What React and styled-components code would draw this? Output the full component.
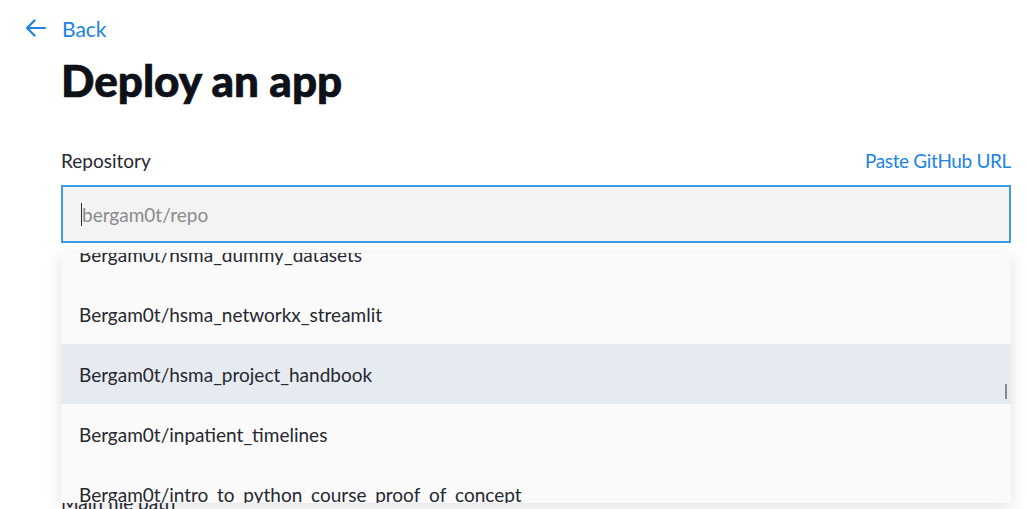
import React from 'react';
import styled, { createGlobalStyle } from 'styled-components';

const GlobalStyle = createGlobalStyle`
  html, body {
    margin: 0;
    padding: 0;
    height: 509px;
    background: #ffffff;
    overflow: hidden;
  }
  body {
    font-family: 'Lato', 'Noto Sans', sans-serif;
    color: #262730;
  }
`;

const Page = styled.div`
  width: 1027px;
  display: flex;
  flex-direction: column;
  padding: 14px 16px 0 24px;
  box-sizing: border-box;

  & > * {
    flex-shrink: 0;
  }
`;

const BackLink = styled.a`
  display: flex;
  align-items: center;
  gap: 16px;
  height: 28px;
  color: #1c83e1;
  font-size: 21px;
  text-decoration: none;
  cursor: pointer;
`;

const Content = styled.div`
  display: flex;
  flex-direction: column;
  margin-left: 37px;
`;

const Title = styled.h1`
  margin: 12px 0 0;
  font-size: 44px;
  font-weight: 900;
  color: #0e1117;
  -webkit-text-stroke: 0.7px #0e1117;
  line-height: 52px;
`;

const Field = styled.div`
  position: relative;
  display: flex;
  flex-direction: column;
  flex-shrink: 0;
  margin-top: ${p => p.$top || 0}px;
`;

const LabelRow = styled.div`
  display: flex;
  justify-content: space-between;
  align-items: center;
  height: 24px;
  margin-bottom: 13px;
`;

const Label = styled.span`
  font-size: 19px;
  color: #262730;
`;

const TextLink = styled.span`
  font-size: 19px;
  letter-spacing: -0.35px;
  color: #1c83e1;
`;

const Input = styled.input`
  height: 58px;
  box-sizing: border-box;
  border: 2px solid ${p => (p.$focused ? '#3d9be9' : '#f0f2f6')};
  background: #f3f3f3;
  padding: 0 19px;
  font-family: inherit;
  font-size: 19px;
  color: #262730;
  outline: none;
  caret-color: #262730;

  &::placeholder {
    color: #8a8a8e;
  }
`;

const Caret = styled.span`
  position: absolute;
  left: 20px;
  top: 55px;
  width: 1px;
  height: 23px;
  background: #262730;
  pointer-events: none;
`;

const Menu = styled.div`
  position: absolute;
  top: 105px;
  left: 0;
  right: 0;
  height: 250px;
  overflow: hidden;
  background: #fafafa;
  box-shadow: 0 4px 16px rgba(0, 0, 0, 0.12);
  z-index: 5;
`;

const MenuList = styled.ul`
  list-style: none;
  margin: -29px 0 0;
  padding: 0;
`;

const MenuItem = styled.li`
  height: 60px;
  display: flex;
  align-items: center;
  padding: 0 18px;
  font-size: 19px;
  color: #262730;
  background: ${p => (p.$active ? '#e6eaf1' : 'transparent')};
`;

const ScrollThumb = styled.div`
  position: absolute;
  right: 4px;
  top: 131px;
  width: 2px;
  height: 15px;
  background: #8a8a8a;
`;

const ArrowLeft = () => (
  <svg width="22" height="20" viewBox="0 0 22 20" fill="none">
    <path
      d="M21 10H3M10.5 2.5L3 10l7.5 7.5"
      stroke="#1c83e1"
      strokeWidth="2.2"
      strokeLinecap="round"
      strokeLinejoin="round"
    />
  </svg>
);

const repos = [
  'Bergam0t/hsma_dummy_datasets',
  'Bergam0t/hsma_networkx_streamlit',
  'Bergam0t/hsma_project_handbook',
  'Bergam0t/inpatient_timelines',
  'Bergam0t/intro_to_python_course_proof_of_concept',
];

export default function App() {
  return (
    <>
      <GlobalStyle />
      <Page>
        <BackLink>
          <ArrowLeft />
          Back
        </BackLink>
        <Content>
          <Title>Deploy an app</Title>
          <Field $top={42}>
            <LabelRow>
              <Label>Repository</Label>
              <TextLink>Paste GitHub URL</TextLink>
            </LabelRow>
            <Input $focused placeholder="bergam0t/repo" />
            <Caret />
            <Menu>
              <MenuList>
                {repos.map((r, i) => (
                  <MenuItem key={r} $active={i === 2}>
                    {r}
                  </MenuItem>
                ))}
              </MenuList>
              <ScrollThumb />
            </Menu>
          </Field>
          <Field $top={76}>
            <LabelRow>
              <Label>Branch</Label>
            </LabelRow>
            <Input defaultValue="main" />
          </Field>
          <Field $top={76}>
            <LabelRow>
              <Label>Main file path</Label>
            </LabelRow>
            <Input defaultValue="streamlit_app.py" />
          </Field>
        </Content>
      </Page>
    </>
  );
}
